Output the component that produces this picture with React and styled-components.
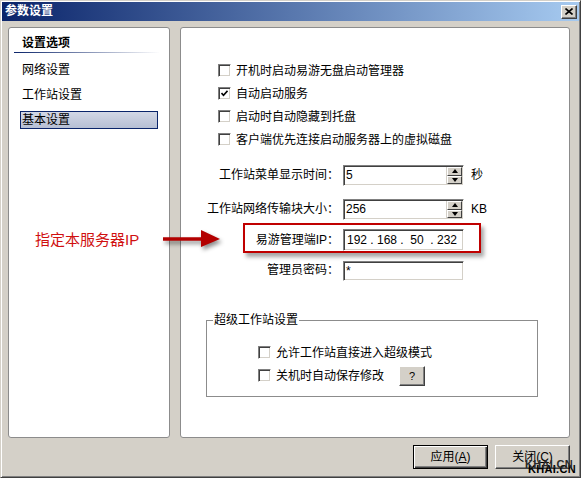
import React from 'react';
import styled, { createGlobalStyle } from 'styled-components';

const GlobalStyle = createGlobalStyle`
  html, body {
    margin: 0;
    padding: 0;
    background: #d4d0c8;
  }
  body {
    font-family: "Liberation Sans", "Noto Sans CJK SC", sans-serif;
    font-size: 12px;
    color: #000;
  }
  * {
    box-sizing: border-box;
  }
`;

const Window = styled.div`
  position: relative;
  width: 581px;
  height: 478px;
  padding: 1px;
  display: flex;
  flex-direction: column;
  overflow: hidden;
  background: #d4d0c8;
  border: 1px solid;
  border-color: #d4d0c8 #404040 #404040 #d4d0c8;
  box-shadow: inset 1px 1px #fff, inset -1px -1px #808080;
`;

const TitleBar = styled.div`
  height: 19px;
  display: flex;
  align-items: center;
  justify-content: space-between;
  padding: 0 2px 0 3px;
  background: linear-gradient(90deg, #0a246a, #a6caf0);
`;

const Title = styled.span`
  color: #fff;
  font-weight: bold;
  font-size: 12px;
  line-height: 19px;
`;

const CloseButton = styled.div`
  width: 16px;
  height: 14px;
  display: flex;
  align-items: center;
  justify-content: center;
  background: #d4d0c8;
  border: 1px solid;
  border-color: #fff #404040 #404040 #fff;
  box-shadow: inset -1px -1px #808080;
`;

const Body = styled.div`
  flex: 1;
  padding: 6px 9px 0 6px;
  display: flex;
  flex-direction: column;
`;

const Panels = styled.div`
  height: 411px;
  display: flex;
  gap: 10px;
`;

const Panel = styled.div`
  position: relative;
  background: #fff;
  border: 1px solid #8c8c8c;
  border-radius: 3px;
  width: ${({ $width }) => ($width ? `${$width}px` : 'auto')};
  flex: ${({ $width }) => ($width ? 'none' : '1')};
`;

const NavHeader = styled.div`
  padding: 7px 0 0 13px;
  font-weight: bold;
  line-height: 16px;
`;

const Divider = styled.div`
  height: 1px;
  margin: 1px 9px 0 5px;
  background: linear-gradient(90deg, #0a246a, #ffffff);
`;

const NavList = styled.div`
  padding-top: 8px;
  display: flex;
  flex-direction: column;
  gap: 7px;
`;

const NavItem = styled.div`
  height: 18px;
  width: 138px;
  margin-left: 11px;
  padding-left: 1px;
  line-height: 16px;
  border: 1px solid ${({ $active }) => ($active ? '#0a246a' : 'transparent')};
  background: ${({ $active }) =>
    $active ? 'linear-gradient(180deg, #d3d8e6, #b6bfd4)' : 'transparent'};
`;

const Options = styled.div`
  padding: 31px 0 0 37px;
`;

const CheckRow = styled.label`
  height: 23px;
  display: flex;
  align-items: center;
  gap: 5px;
  white-space: nowrap;
  line-height: 16px;
`;

const Box = styled.span`
  width: 13px;
  height: 13px;
  flex: none;
  display: flex;
  align-items: center;
  justify-content: center;
  background: #fff;
  border: 1px solid;
  border-color: #808080 #fff #fff #808080;
  box-shadow: inset 1px 1px #404040, inset -1px -1px #d4d0c8;
`;

const FormRow = styled.div`
  display: grid;
  grid-template-columns: 158px 121px auto;
  column-gap: 4px;
  align-items: center;
  margin-top: ${({ $top }) => $top}px;
`;

const FieldLabel = styled.span`
  text-align: right;
  white-space: nowrap;
  line-height: 21px;
`;

const TextBox = styled.div`
  height: ${({ $h }) => $h || 21}px;
  display: flex;
  align-items: stretch;
  background: #fff;
  border: 1px solid;
  border-color: #808080 #fff #fff #808080;
  box-shadow: inset 1px 1px #404040, inset -1px -1px #d4d0c8;
`;

const Value = styled.span`
  flex: 1;
  padding: 2px 0 0 2px;
  font-size: 12px;
  line-height: 15px;
`;

const Spin = styled.div`
  width: 16px;
  margin: 1px 1px 1px 0;
  display: flex;
  flex-direction: column;
  border-left: 1px solid #d4d0c8;
`;

const SpinButton = styled.div`
  flex: 1;
  display: flex;
  align-items: center;
  justify-content: center;
  background: #d4d0c8;
  border: 1px solid;
  border-color: #fff #404040 #404040 #fff;

  &::after {
    content: '';
    border-left: 3.5px solid transparent;
    border-right: 3.5px solid transparent;
    ${({ $down }) =>
      $down ? 'border-top: 4px solid #000;' : 'border-bottom: 4px solid #000;'}
  }
`;

const Unit = styled.span`
  margin-left: 3px;
  line-height: 21px;
`;

const IpValue = styled.div`
  display: flex;
  padding: 3px 0 0 2px;
  font-size: 12px;
  line-height: 15px;
`;

const Octet = styled.span`
  width: 22px;
  text-align: center;
`;

const Dot = styled.span`
  width: 8px;
  text-align: center;
`;

const Highlight = styled.div`
  position: absolute;
  left: 62px;
  top: 195px;
  width: 238px;
  height: 30px;
  border: 2px solid #c00000;
  box-shadow: 3px 4px 4px rgba(0, 0, 0, 0.35);
  pointer-events: none;
`;

const Group = styled.fieldset`
  margin: 31px 0 0 25px;
  width: 332px;
  height: 85px;
  padding: 13px 0 0 6px;
  border: 1px solid #8c8c8c;
`;

const Legend = styled.legend`
  padding: 0 1px;
  line-height: 16px;
`;

const GroupBody = styled.div`
  padding-left: 45px;
`;

const HelpButton = styled.div`
  width: 26px;
  height: 20px;
  margin-left: 10px;
  display: flex;
  align-items: center;
  justify-content: center;
  font-size: 11px;
  background: #d4d0c8;
  border: 1px solid;
  border-color: #fff #404040 #404040 #fff;
  box-shadow: inset -1px -1px #808080;
`;

const Footer = styled.div`
  padding-top: 7px;
  display: flex;
  justify-content: flex-end;
  gap: 7px;
`;

const Button = styled.div`
  width: 75px;
  height: 24px;
  display: flex;
  align-items: center;
  justify-content: center;
  line-height: 16px;
  background: #d4d0c8;
  border: 1px solid;
  border-color: ${({ $default }) =>
    $default ? '#000' : '#fff #404040 #404040 #fff'};
  box-shadow: ${({ $default }) =>
    $default
      ? 'inset 1px 1px #fff, inset -1px -1px #404040, inset -2px -2px #808080'
      : 'inset -1px -1px #808080'};

  u {
    text-decoration: underline;
    text-underline-offset: 1px;
  }
`;

const Note = styled.div`
  position: absolute;
  left: 34px;
  top: 230px;
  font-size: 15px;
  line-height: 18px;
  color: #d01010;
  white-space: nowrap;
`;

const Arrow = styled.svg`
  position: absolute;
  left: 158px;
  top: 226px;
  filter: drop-shadow(2px 3px 2px rgba(0, 0, 0, 0.45));
`;

const Watermark = styled.div`
  position: absolute;
  left: 524px;
  top: 457px;
  font-family: "Liberation Sans", sans-serif;
  font-weight: bold;
  font-size: 11px;
  line-height: 13px;
  color: #2a2a2a;
  text-shadow: 3px 5px 0 #000;
  letter-spacing: 0.3px;
`;

const Check = ({ checked, children }) => (
  <CheckRow>
    <Box>
      {checked && (
        <svg width="7" height="7" viewBox="0 0 7 7">
          <path d="M0.5 3 L2.5 5.2 L6.5 0.8" stroke="#000" strokeWidth="1.6" fill="none" />
        </svg>
      )}
    </Box>
    {children}
  </CheckRow>
);

const SpinInput = ({ value }) => (
  <TextBox>
    <Value>{value}</Value>
    <Spin>
      <SpinButton />
      <SpinButton $down />
    </Spin>
  </TextBox>
);

const ipParts = ['192', '168', '50', '232'];

export default function App() {
  return (
    <>
      <GlobalStyle />
      <Window>
        <TitleBar>
          <Title>参数设置</Title>
          <CloseButton>
            <svg width="8" height="7" viewBox="0 0 8 7">
              <path d="M0.5 0.5 L7.5 6.5 M7.5 0.5 L0.5 6.5" stroke="#000" strokeWidth="1.6" />
            </svg>
          </CloseButton>
        </TitleBar>
        <Body>
          <Panels>
            <Panel $width={162}>
              <NavHeader>设置选项</NavHeader>
              <Divider />
              <NavList>
                <NavItem>网络设置</NavItem>
                <NavItem>工作站设置</NavItem>
                <NavItem $active>基本设置</NavItem>
              </NavList>
            </Panel>
            <Panel>
              <Options>
                <Check>开机时启动易游无盘启动管理器</Check>
                <Check checked>自动启动服务</Check>
                <Check>启动时自动隐藏到托盘</Check>
                <Check>客户端优先连接启动服务器上的虚拟磁盘</Check>
              </Options>
              <FormRow $top={14}>
                <FieldLabel>工作站菜单显示时间：</FieldLabel>
                <SpinInput value="5" />
                <Unit>秒</Unit>
              </FormRow>
              <FormRow $top={13}>
                <FieldLabel>工作站网络传输块大小：</FieldLabel>
                <SpinInput value="256" />
                <Unit>KB</Unit>
              </FormRow>
              <FormRow $top={9}>
                <FieldLabel>易游管理端IP：</FieldLabel>
                <TextBox $h={22}>
                  <IpValue>
                    {ipParts.map((part, i) => (
                      <React.Fragment key={i}>
                        {i > 0 && <Dot>.</Dot>}
                        <Octet>{part}</Octet>
                      </React.Fragment>
                    ))}
                  </IpValue>
                </TextBox>
              </FormRow>
              <FormRow $top={9}>
                <FieldLabel>管理员密码：</FieldLabel>
                <TextBox $h={20}>
                  <Value>*</Value>
                </TextBox>
              </FormRow>
              <Group>
                <Legend>超级工作站设置</Legend>
                <GroupBody>
                  <Check>允许工作站直接进入超级模式</Check>
                  <CheckRow as="div">
                    <Box />
                    关机时自动保存修改
                    <HelpButton>?</HelpButton>
                  </CheckRow>
                </GroupBody>
              </Group>
              <Highlight />
            </Panel>
          </Panels>
          <Footer>
            <Button $default>
              应用(<u>A</u>)
            </Button>
            <Button>
              关闭(<u>C</u>)
            </Button>
          </Footer>
        </Body>
        <Note>指定本服务器IP</Note>
        <Arrow width="66" height="26" viewBox="0 0 66 26">
          <path d="M4 12 L46 12" stroke="#b30000" strokeWidth="3.5" />
          <path d="M42 3 L61 12 L42 20 Z" fill="#b30000" />
        </Arrow>
        <Watermark>KHAI.CN</Watermark>
      </Window>
    </>
  );
}
